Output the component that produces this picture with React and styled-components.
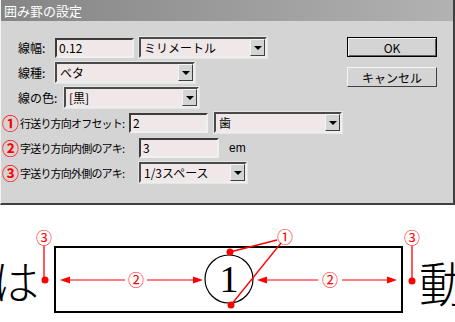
import styled, { createGlobalStyle } from "styled-components";

const GlobalStyle = createGlobalStyle`
    body {
        margin: 0;
        background: #FFFFFF;
        font-family: "Noto Sans CJK JP", "DejaVu Sans", sans-serif;
    }
`;

export default function App() {
    return (
        <>
            <GlobalStyle />
            <SCPage>
                <SCDialog>
                    <SCTitleBar>囲み罫の設定</SCTitleBar>
                    <SCBody>
                        <SCForm>
                            <SCRow indent={17}>
                                <SCLabel w={37}>線幅:</SCLabel>
                                <SCInput w={79} readOnly value="0.12" />
                                <SCSelect w={128} gap={5}>
                                    <span>ミリメートル</span>
                                    <SCDropButton />
                                </SCSelect>
                            </SCRow>
                            <SCRow indent={17}>
                                <SCLabel w={37}>線種:</SCLabel>
                                <SCSelect w={140}>
                                    <span>ベタ</span>
                                    <SCDropButton />
                                </SCSelect>
                            </SCRow>
                            <SCRow indent={17}>
                                <SCLabel w={46}>線の色:</SCLabel>
                                <SCSelect w={135}>
                                    <span>[黒]</span>
                                    <SCDropButton />
                                </SCSelect>
                            </SCRow>
                            <SCRow indent={1}>
                                <SCLabel w={127} small><SCNum>①</SCNum>行送り方向オフセット:</SCLabel>
                                <SCInput w={79} readOnly value="2" />
                                <SCSelect w={128} gap={6}>
                                    <span>歯</span>
                                    <SCDropButton />
                                </SCSelect>
                            </SCRow>
                            <SCRow indent={1}>
                                <SCLabel w={137} small><SCNum>②</SCNum>字送り方向内側のアキ:</SCLabel>
                                <SCInput w={80} readOnly value="3" />
                                <SCUnit>em</SCUnit>
                            </SCRow>
                            <SCRow indent={1}>
                                <SCLabel w={137} small><SCNum>③</SCNum>字送り方向外側のアキ:</SCLabel>
                                <SCSelect w={108}>
                                    <span>1/3スペース</span>
                                    <SCDropButton />
                                </SCSelect>
                            </SCRow>
                        </SCForm>
                        <SCButtons>
                            <SCButton primary>OK</SCButton>
                            <SCButton>キャンセル</SCButton>
                        </SCButtons>
                    </SCBody>
                </SCDialog>
                <SCDiagram width="455" height="117" viewBox="0 0 455 117">
                    <text x="-7" y="94" fontSize="46" fontWeight="300" fill="#000">は</text>
                    <text x="419" y="97" fontSize="48" fontWeight="300" fill="#000">動</text>
                    <rect x="55" y="42" width="347" height="65" fill="none" stroke="#000" strokeWidth="2" />
                    <circle cx="229" cy="74" r="24" fill="none" stroke="#000" strokeWidth="1.2" />
                    <text x="229" y="87" fontSize="38" textAnchor="middle" fontFamily="'Liberation Serif', serif" fill="#000">1</text>
                    <g fill="#FF0000" stroke="#FF0000">
                        <text x="44" y="39" fontSize="16" textAnchor="middle" stroke="none">③</text>
                        <line x1="44" y1="41" x2="44" y2="75" strokeWidth="1.3" />
                        <circle cx="45" cy="75" r="3.5" stroke="none" />
                        <line x1="66" y1="75" x2="125" y2="75" strokeWidth="1" />
                        <polygon points="60,75 70,71.5 70,78.5" stroke="none" />
                        <text x="136" y="81" fontSize="16" textAnchor="middle" stroke="none">②</text>
                        <line x1="147" y1="75" x2="196" y2="75" strokeWidth="1" />
                        <polygon points="203,75 193,71.5 193,78.5" stroke="none" />
                        <text x="285" y="38" fontSize="16" textAnchor="middle" stroke="none">①</text>
                        <line x1="277" y1="35" x2="230" y2="47" strokeWidth="1.3" />
                        <line x1="281" y1="38" x2="231" y2="100" strokeWidth="1.3" />
                        <circle cx="230" cy="47" r="3.5" stroke="none" />
                        <circle cx="231" cy="100" r="3.5" stroke="none" />
                        <line x1="264" y1="75" x2="318" y2="75" strokeWidth="1" />
                        <polygon points="257,75 267,71.5 267,78.5" stroke="none" />
                        <text x="330" y="81" fontSize="16" textAnchor="middle" stroke="none">②</text>
                        <line x1="342" y1="75" x2="391" y2="75" strokeWidth="1" />
                        <polygon points="397,75 387,71.5 387,78.5" stroke="none" />
                        <text x="412" y="39" fontSize="16" textAnchor="middle" stroke="none">③</text>
                        <line x1="412" y1="41" x2="412" y2="76" strokeWidth="1.3" />
                        <circle cx="412" cy="76" r="3.5" stroke="none" />
                    </g>
                </SCDiagram>
            </SCPage>
        </>
    )
}

const SCPage = styled.div`
    width: 455px;
    height: 322px;
    overflow: hidden;
    display: flex;
    flex-direction: column;
`;

const SCDialog = styled.div`
    box-sizing: border-box;
    width: 455px;
    height: 205px;
    background: #D4D4D4;
    border-left: 1px solid #F2F2F2;
    border-right: 2px solid #404040;
    border-bottom: 2px solid #404040;
    display: flex;
    flex-direction: column;
`;

const SCTitleBar = styled.div`
    height: 21px;
    padding-left: 3px;
    background: linear-gradient(to right, #858585 0%, #999999 45%, #B2B2B2 100%);
    color: #FFFFFF;
    font-size: 13px;
    line-height: 21px;
`;

const SCBody = styled.div`
    display: flex;
    padding-top: 16px;
    padding-right: 16px;
`;

const SCForm = styled.div`
    display: flex;
    flex-direction: column;
    gap: 4px;
`;

const SCRow = styled.div`
    display: flex;
    align-items: center;
    height: 21px;
    padding-left: ${props => props.indent}px;
`;

const SCLabel = styled.div`
    width: ${props => props.w}px;
    flex-shrink: 0;
    display: flex;
    align-items: center;
    font-size: ${props => props.small ? "11px" : "12px"};
    letter-spacing: ${props => props.small ? "-0.8px" : "0"};
    color: #000000;
    white-space: nowrap;
`;

const SCNum = styled.span`
    color: #FF0000;
    font-size: 17px;
    font-weight: 700;
    margin-right: 1px;
    letter-spacing: 0;
`;

const SCInput = styled.input`
    box-sizing: border-box;
    width: ${props => props.w}px;
    height: 20px;
    margin: 0;
    padding: 0 2px;
    background: #F0E8E8;
    border: 2px solid;
    border-color: #3C3C3C #F0F0F0 #F0F0F0 #3C3C3C;
    font-family: "Noto Sans CJK JP", "DejaVu Sans", sans-serif;
    font-size: 12px;
    color: #000000;
    outline: none;
`;

const SCSelect = styled.div`
    box-sizing: border-box;
    width: ${props => props.w}px;
    height: 21px;
    margin-left: ${props => props.gap || 0}px;
    display: flex;
    align-items: stretch;
    justify-content: space-between;
    background: #F0E8E8;
    border: 2px solid;
    border-color: #4A4A4A #EDEDED #EDEDED #4A4A4A;
    box-shadow: 0 0 0 1px #E6E6E6;
    font-size: 12px;
    span {
        padding-left: 3px;
        line-height: 17px;
        white-space: nowrap;
    }
`;

const SCDropButton = styled.div`
    box-sizing: border-box;
    width: 15px;
    flex-shrink: 0;
    background: #D4D4D4;
    border: 1px solid;
    border-color: #F4F4F4 #404040 #404040 #F4F4F4;
    display: flex;
    align-items: center;
    justify-content: center;
    &::after {
        content: "";
        border-left: 4px solid transparent;
        border-right: 4px solid transparent;
        border-top: 4px solid #000000;
    }
`;

const SCUnit = styled.span`
    margin-left: 10px;
    font-family: "Liberation Sans", sans-serif;
    font-size: 12px;
    color: #000000;
`;

const SCButtons = styled.div`
    margin-left: auto;
    display: flex;
    flex-direction: column;
    gap: 10px;
`;

const SCButton = styled.button`
    box-sizing: border-box;
    width: 90px;
    height: 20px;
    padding: 0;
    background: #D4D4D4;
    border: 1px solid;
    border-color: ${props => props.primary ? "#000000" : "#F4F4F4 #404040 #404040 #F4F4F4"};
    box-shadow: ${props => props.primary ? "inset 1px 1px 0 #F4F4F4, inset -1px -1px 0 #606060" : "none"};
    font-family: "Noto Sans CJK JP", "DejaVu Sans", sans-serif;
    font-size: 12px;
    color: #000000;
`;

const SCDiagram = styled.svg`
    display: block;
    font-family: "Noto Sans CJK JP", sans-serif;
`;
